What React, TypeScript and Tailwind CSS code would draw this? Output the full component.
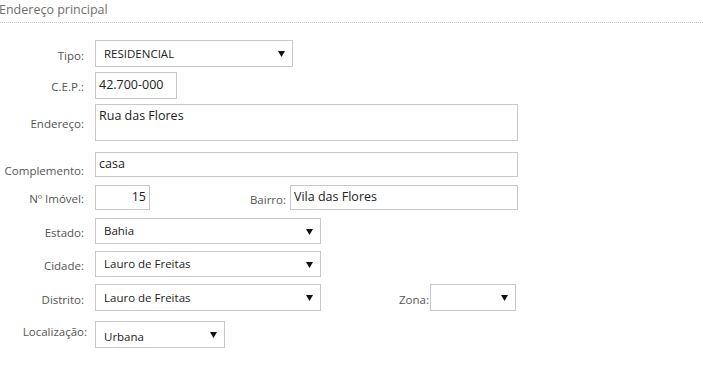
import React from 'react';

const Arrow: React.FC = () => (
    <svg width="7" height="7" viewBox="0 0 7 7" className="shrink-0">
        <polygon points="0,1 7,1 3.5,7" fill="#111" />
    </svg>
);

const Label: React.FC<{ text: string; className?: string }> = ({ text, className = '' }) => (
    <span className={`w-[84px] shrink-0 text-right text-[11.5px] text-[#555] ${className}`}>{text}</span>
);

const Select: React.FC<{ value: string; className: string }> = ({ value, className }) => (
    <div className={`flex items-center justify-between border border-[#c8c8c8] pl-[8px] pr-[7px] text-[11.5px] text-[#222] ${className}`}>
        <span>{value}</span>
        <Arrow />
    </div>
);

const Input: React.FC<{ value: string; className: string }> = ({ value, className }) => (
    <div className={`flex items-center border border-[#c8c8c8] px-[3px] text-[12.5px] text-[#222] ${className}`}>
        {value}
    </div>
);

const App: React.FC = () => {
    return (
        <div className="w-[703px] h-[367px] overflow-hidden bg-white font-['Open_Sans',sans-serif]">
            <div className="h-[23px] border-b border-dotted border-[#c4c4c4]">
                <span className="block -ml-[1px] pt-[1px] text-[12.5px] leading-[18px] text-[#6f6f6f]">Endereço principal</span>
            </div>

            <div className="pt-[17px]">
                <div className="h-[27px] flex items-center gap-[11px]">
                    <Label text="Tipo:" className="pt-[5px]" />
                    <Select value="RESIDENCIAL" className="w-[198px] h-[27px]" />
                </div>

                <div className="mt-[5px] h-[27px] flex items-center gap-[11px]">
                    <Label text="C.E.P.:" className="pt-[3px]" />
                    <Input value="42.700-000" className="w-[82px] h-[27px]" />
                </div>

                <div className="mt-[5px] h-[37px] flex items-start gap-[11px]">
                    <Label text="Endereço:" className="pt-[11px]" />
                    <div className="w-[423px] h-[37px] border border-[#c8c8c8] px-[3px] pt-[2px] text-[12.5px] text-[#222]">Rua das Flores</div>
                </div>

                <div className="mt-[11px] h-[25px] flex items-center gap-[11px]">
                    <Label text="Complemento:" className="pt-[12px]" />
                    <Input value="casa" className="w-[423px] h-[25px]" />
                </div>

                <div className="mt-[8px] h-[25px] flex items-center">
                    <Label text="Nº Imóvel:" className="pt-[3px]" />
                    <Input value="15" className="ml-[11px] w-[55px] h-[25px] justify-end" />
                    <span className="w-[136px] shrink-0 pt-[5px] text-right text-[11.5px] text-[#555]">Bairro:</span>
                    <Input value="Vila das Flores" className="ml-[4px] w-[228px] h-[25px]" />
                </div>

                <div className="mt-[8px] h-[26px] flex items-center gap-[11px]">
                    <Label text="Estado:" className="pt-[4px]" />
                    <Select value="Bahia" className="w-[226px] h-[26px]" />
                </div>

                <div className="mt-[7px] h-[26px] flex items-center gap-[11px]">
                    <Label text="Cidade:" className="pt-[4px]" />
                    <Select value="Lauro de Freitas" className="w-[226px] h-[26px]" />
                </div>

                <div className="mt-[7px] h-[27px] flex items-center">
                    <Label text="Distrito:" className="pt-[4px]" />
                    <Select value="Lauro de Freitas" className="ml-[11px] w-[226px] h-[27px]" />
                    <span className="w-[108px] shrink-0 pt-[4px] text-right text-[11.5px] text-[#555]">Zona:</span>
                    <Select value="" className="ml-[1px] w-[86px] h-[27px]" />
                </div>

                <div className="mt-[10px] h-[27px] flex items-center gap-[8px]">
                    <span className="w-[87px] shrink-0 pb-[6px] text-right text-[11.5px] text-[#555]">Localização:</span>
                    <Select value="Urbana" className="w-[130px] h-[27px] [&>span]:pt-[5px]" />
                </div>
            </div>
        </div>
    );
};

export default App;
